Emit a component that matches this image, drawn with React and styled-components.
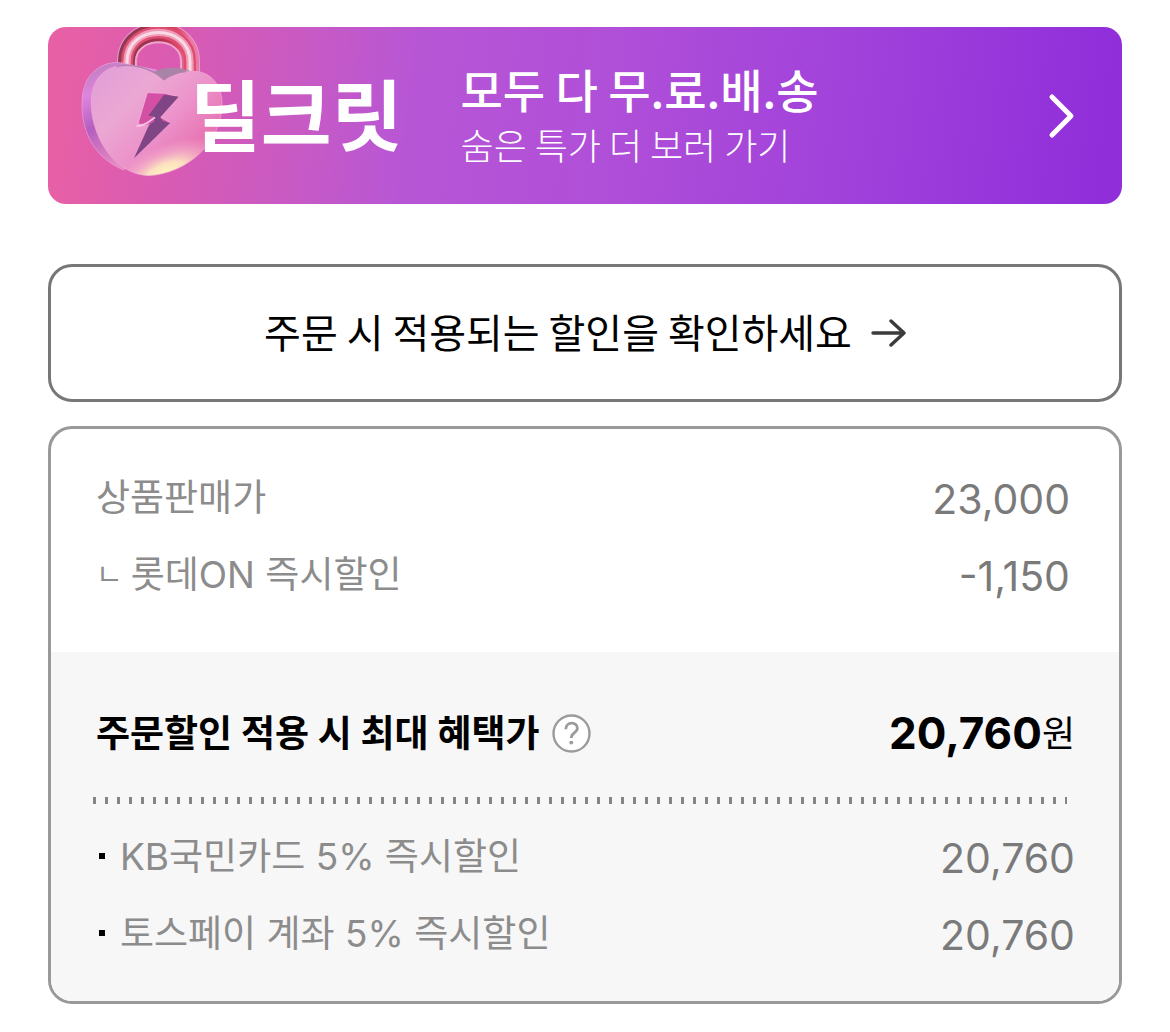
import styled, { createGlobalStyle } from "styled-components";

const GlobalStyle = createGlobalStyle`
  * {
    box-sizing: border-box;
  }

  body {
    margin: 0;
    background: white;
    font-family: Inter, "Noto Sans CJK KR", sans-serif;
  }
`;

const Page = styled.main`
  display: flex;
  flex-direction: column;
  padding: 27px 48px 28px;
`;

const Banner = styled.a`
  display: flex;
  align-items: center;
  height: 177px;
  margin-bottom: 60px;
  padding: 0 46px 0 30px;
  border-radius: 18px;
  overflow: hidden;
  color: white;
  font-family: "Noto Sans CJK KR", sans-serif;
  text-decoration: none;
  white-space: nowrap;
  background: linear-gradient(
    97deg,
    #e760a6 2%,
    #d95bb2 12%,
    #c85ac4 24%,
    #b756d5 34%,
    #b04fd8 52%,
    #a041db 75%,
    #902eda 98%
  );
`;

const Lock = styled.svg`
  flex: none;
  align-self: flex-start;
  width: 150px;
  height: 153px;
`;

const BannerLogo = styled.strong`
  margin-left: -38px;
  padding-bottom: 8px;
  font-size: 77px;
  font-weight: 700;
  line-height: 96px;
  z-index: 1;
`;

const BannerCopy = styled.span`
  display: flex;
  flex: 1;
  flex-direction: column;
  margin-left: 58px;
`;

const BannerTitle = styled.span`
  font-size: 46px;
  font-weight: 500;
  line-height: 56px;
`;

const BannerText = styled.span`
  font-size: 36px;
  font-weight: 300;
  line-height: 56px;
`;

const DiscountButton = styled.button`
  display: flex;
  align-items: center;
  justify-content: center;
  gap: 18px;
  height: 138px;
  margin-bottom: 24px;
  padding: 0;
  border: 3px solid #787676;
  border-radius: 24px;
  background: white;
  color: black;
  font-family: "Noto Sans CJK KR", sans-serif;
  font-size: 40px;
`;

const ButtonText = styled.span`
  padding-bottom: 4px;
`;

const Card = styled.section`
  border: 3px solid #999;
  border-radius: 24px;
  overflow: hidden;
`;

const PriceList = styled.dl`
  margin: 0;
  padding: 31px 49px 38px 45px;
`;

const Benefit = styled.div`
  padding: 41px 44px 28px 45px;
  background: #f7f7f7;
`;

const BenefitList = styled.dl`
  margin: 0;
`;

const Row = styled.div`
  display: flex;
  align-items: center;
  justify-content: space-between;
  height: 77px;
`;

const Label = styled.dt`
  display: flex;
  align-items: center;
  padding-bottom: 8px;
  color: #8c8c8c;
  font-size: 37px;

  ${(props) =>
    props.$bullet &&
    `
    &::before {
      content: "";
      width: 6px;
      height: 6px;
      margin: 5px 15px 0 3px;
      background: black;
    }
  `}
`;

const Branch = styled.span`
  margin-right: 8px;
  font-size: 29px;
`;

const Price = styled.dd`
  margin: 0;
  color: #7a7a7a;
  font-size: 41px;
`;

const Total = styled.div`
  display: flex;
  align-items: center;
  height: 80px;
`;

const TotalLabel = styled.h2`
  margin: 0;
  padding-bottom: 4px;
  font-size: 37px;
  font-weight: 700;
`;

const HelpButton = styled.button`
  display: flex;
  margin-left: 12px;
  padding: 0;
  border: 0;
  background: none;
`;

const TotalPrice = styled.strong`
  margin-left: auto;
  font-size: 44px;
  font-weight: 700;
`;

const Won = styled.span`
  padding-bottom: 4px;
  font-size: 36px;
`;

const Divider = styled.hr`
  height: 7px;
  margin: 24px 8px 15px -3px;
  border: 0;
  background: repeating-linear-gradient(
    90deg,
    #858585 0 3px,
    transparent 3px 12px
  );
`;

const prices = [
  { name: "상품판매가", price: "23,000" },
  { name: "롯데ON 즉시할인", price: "-1,150", branch: true },
];

const benefits = [
  { name: "KB국민카드 5% 즉시할인", price: "20,760" },
  { name: "토스페이 계좌 5% 즉시할인", price: "20,760" },
];

const heart =
  "M372 179 C340 148 283 129 231 139 C174 151 151 200 154 258 C158 357 226 463 326 467 C442 462 544 366 546 256 C548 195 511 154 462 154 C426 154 397 164 372 179 Z";
const shackle = "M261 165 V125 C261 8 450 8 450 125 V175";

function HeartLock() {
  return (
    <Lock viewBox="114 21 450 459" aria-hidden="true">
      <defs>
        <linearGradient id="face" x1="0.1" y1="0" x2="0.9" y2="0.7">
          <stop offset="0" stopColor="#e29fd8" />
          <stop offset="0.35" stopColor="#eba8d3" />
          <stop offset="0.65" stopColor="#ec93cb" />
          <stop offset="1" stopColor="#e66fae" />
        </linearGradient>
        <linearGradient id="side" x1="0" y1="0" x2="0.3" y2="1">
          <stop offset="0" stopColor="#b77bb4" />
          <stop offset="0.3" stopColor="#dd85df" />
          <stop offset="0.6" stopColor="#b45fc0" />
          <stop offset="1" stopColor="#e68ac0" />
        </linearGradient>
        <radialGradient
          id="glow"
          cx="0"
          cy="0"
          r="1"
          gradientUnits="userSpaceOnUse"
          gradientTransform="translate(375 465) rotate(-24) scale(190 90)"
        >
          <stop offset="0" stopColor="#fff8c0" />
          <stop offset="0.35" stopColor="#fce0c0" />
          <stop offset="0.7" stopColor="#f5b0cb" stopOpacity="0.6" />
          <stop offset="1" stopColor="#f5a6cb" stopOpacity="0" />
        </radialGradient>
        <linearGradient id="edge" x1="0" y1="0" x2="1" y2="0">
          <stop offset="0" stopColor="#8d3a52" />
          <stop offset="0.5" stopColor="#a4304f" />
          <stop offset="0.8" stopColor="#e04468" />
          <stop offset="1" stopColor="#e87ba6" />
        </linearGradient>
      </defs>
      <g fill="none">
        <path d={shackle} stroke="#e99acb" strokeWidth="60" />
        <path d={shackle} stroke="url(#edge)" strokeWidth="54" />
        <path d={shackle} stroke="#df4c70" strokeWidth="36" />
        <path d={shackle} stroke="#ef9bb8" strokeWidth="22" />
        <path d={shackle} stroke="#f8d9e4" strokeWidth="9" />
        <path
          d="M287 140 V125 C287 48 424 48 424 125 V150"
          stroke="#f0a6cd"
          strokeWidth="5"
        />
      </g>
      <path
        d="M235 127 C168 128 124 175 126 256 C126 340 168 418 252 450 L330 350 L350 150 Z"
        fill="url(#side)"
        stroke="#e9a3dd"
        strokeWidth="2"
      />
      <path
        d="M340 157 C365 143 405 138 440 150 L480 160 L440 200 H370 Z"
        fill="#a984a7"
      />
      <path d={heart} fill="url(#face)" />
      <path d={heart} fill="url(#glow)" stroke="#f0a9d4" strokeWidth="2" />
      <path
        d="M230 140 C275 128 334 144 372 179 C392 165 413 157 437 155"
        fill="none"
        stroke="#b27fac"
        strokeWidth="4"
      />
      <path
        d="M322 218 L374 220 L416 230 L361 292 L389 306 L316 316 L294 311 Z"
        fill="#d450a5"
        stroke="#f5bedf"
        strokeWidth="2"
      />
      <path
        d="M372 224 L416 230 L361 292 L369 304 L391 308 L282 415 L327 315 L343 304 L340 289 L325 287 Z"
        fill="#804584"
      />
      <path
        d="M289 317 L300 318 L321 309 L345 292"
        fill="none"
        stroke="#f8c9e3"
        strokeWidth="5"
      />
    </Lock>
  );
}

export default function App() {
  return (
    <>
      <GlobalStyle />
      <Page>
        <Banner href="#deals">
          <HeartLock />
          <BannerLogo>딜크릿</BannerLogo>
          <BannerCopy>
            <BannerTitle>모두 다 무.료.배.송</BannerTitle>
            <BannerText>숨은 특가 더 보러 가기</BannerText>
          </BannerCopy>
          <svg width="28" height="46" viewBox="0 0 28 46" aria-hidden="true">
            <path
              d="M4 4 L23 23 L4 42"
              fill="none"
              stroke="white"
              strokeWidth="5"
              strokeLinecap="round"
              strokeLinejoin="round"
            />
          </svg>
        </Banner>
        <DiscountButton type="button">
          <ButtonText>주문 시 적용되는 할인을 확인하세요</ButtonText>
          <svg width="36" height="30" viewBox="0 0 36 30" aria-hidden="true">
            <path
              d="M3 15 H34 M21 3 L34 15 L21 27"
              fill="none"
              stroke="#3b3b3b"
              strokeWidth="3.4"
              strokeLinecap="round"
              strokeLinejoin="round"
            />
          </svg>
        </DiscountButton>
        <Card>
          <PriceList>
            {prices.map(({ name, price, branch }) => (
              <Row key={name}>
                <Label>
                  {branch && <Branch>ㄴ</Branch>}
                  {name}
                </Label>
                <Price>{price}</Price>
              </Row>
            ))}
          </PriceList>
          <Benefit>
            <Total>
              <TotalLabel>주문할인 적용 시 최대 혜택가</TotalLabel>
              <HelpButton type="button" aria-label="혜택가 안내">
                <svg width="39" height="39" viewBox="0 0 39 39">
                  <circle
                    cx="19.5"
                    cy="19.5"
                    r="18"
                    fill="white"
                    stroke="#9b9b9b"
                    strokeWidth="2.4"
                  />
                  <path
                    d="M13.8 15.2 C13.8 7.2 25.4 7.2 25.4 14.2 C25.4 18.8 19.3 18.5 19.3 24"
                    fill="none"
                    stroke="#9b9b9b"
                    strokeWidth="2.8"
                  />
                  <circle cx="19.3" cy="28.6" r="1.9" fill="#9b9b9b" />
                </svg>
              </HelpButton>
              <TotalPrice>20,760</TotalPrice>
              <Won>원</Won>
            </Total>
            <Divider />
            <BenefitList>
              {benefits.map(({ name, price }) => (
                <Row key={name}>
                  <Label $bullet>{name}</Label>
                  <Price>{price}</Price>
                </Row>
              ))}
            </BenefitList>
          </Benefit>
        </Card>
      </Page>
    </>
  );
}
